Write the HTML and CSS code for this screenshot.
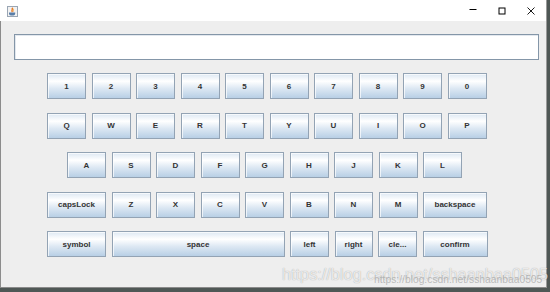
FILE: index.html
```html
<!DOCTYPE html>
<html>
<head>
<meta charset="utf-8">
<link rel="stylesheet" href="styles.css">
</head>
<body>
<div class="window">
  <div class="titlebar">
    <svg class="app-icon" width="11" height="11" viewBox="0 0 11 11">
      <rect x="0.5" y="0.5" width="10" height="10" fill="#f2f2f2" stroke="#9aa6b4"/>
      <path d="M5 1.8 C6.4 3.4 3.8 4 5.4 6" stroke="#e8731a" fill="none" stroke-width="1.4"/>
      <path d="M6.2 2.6 C7 3.6 5.8 4.4 6.6 5.6" stroke="#f0a040" fill="none" stroke-width="0.9"/>
      <path d="M2 6.4 h6.2 v1.4 a1.8 1.8 0 0 1 -1.8 1.6 h-2.6 a1.8 1.8 0 0 1 -1.8 -1.6 z" fill="#5a7ea8"/>
    </svg>
    <div class="controls">
      <span class="ctl ctl-min"><svg width="10" height="10" viewBox="0 0 10 10"><path d="M1.5 4.5 H8.5" stroke="#000" stroke-width="1"/></svg></span>
      <span class="ctl ctl-max"><svg width="10" height="10" viewBox="0 0 10 10"><rect x="2" y="2" width="6" height="6" fill="none" stroke="#000" stroke-width="1"/></svg></span>
      <span class="ctl ctl-close"><svg width="10" height="10" viewBox="0 0 10 10"><path d="M1.5 1.5 L8.5 8.5 M8.5 1.5 L1.5 8.5" stroke="#000" stroke-width="0.9"/></svg></span>
    </div>
  </div>
  <div class="content">
    <div class="field"></div>
    <div class="keyboard">
      <div class="row">
        <button class="key">1</button><button class="key">2</button><button class="key">3</button><button class="key">4</button><button class="key">5</button><button class="key">6</button><button class="key">7</button><button class="key">8</button><button class="key">9</button><button class="key">0</button>
      </div>
      <div class="row">
        <button class="key">Q</button><button class="key">W</button><button class="key">E</button><button class="key">R</button><button class="key">T</button><button class="key">Y</button><button class="key">U</button><button class="key">I</button><button class="key">O</button><button class="key">P</button>
      </div>
      <div class="row row-indent">
        <button class="key">A</button><button class="key">S</button><button class="key">D</button><button class="key">F</button><button class="key">G</button><button class="key">H</button><button class="key">J</button><button class="key">K</button><button class="key">L</button>
      </div>
      <div class="row">
        <button class="key key-wide">capsLock</button><button class="key">Z</button><button class="key">X</button><button class="key">C</button><button class="key">V</button><button class="key">B</button><button class="key">N</button><button class="key">M</button><button class="key key-back">backspace</button>
      </div>
      <div class="row">
        <button class="key key-wide">symbol</button><button class="key key-space">space</button><button class="key">left</button><button class="key key-right">right</button><button class="key">cle...</button><button class="key key-confirm">confirm</button>
      </div>
    </div>
    <div class="watermark">https://blog.csdn.net/sshaanbaa0505</div>
    <div class="watermark-small">https://blog.csdn.net/sshaanbaa0505</div>
  </div>
</div>
</body>
</html>
```
FILE: styles.css
```css
html, body {
  margin: 0;
  padding: 0;
}
body {
  width: 550px;
  height: 292px;
  background: #4f5755;
  overflow: hidden;
  font-family: "Liberation Sans", Arial, sans-serif;
}
.window {
  width: 547px;
  height: 288px;
  display: flex;
  flex-direction: column;
  box-sizing: border-box;
  border-right: 1px solid #9a9a9a;
  border-bottom: 1px solid #8a8a8a;
  background: #eeeeee;
}
.titlebar {
  height: 21px;
  flex: 0 0 21px;
  background: #ffffff;
  display: flex;
  align-items: flex-start;
}
.app-icon {
  margin: 6px 0 0 7px;
}
.controls {
  margin-left: auto;
  display: flex;
  height: 21px;
}
.ctl {
  width: 29px;
  height: 21px;
  display: flex;
  align-items: center;
  justify-content: center;
}
.ctl-min svg { margin-top: -1px; }
.ctl-max svg { margin-top: 1px; }
.ctl-close { width: 30px; }
.ctl-close svg { margin-top: 1px; }
.content {
  position: relative;
  flex: 1;
  background: #eeeeee;
  border-left: 1px solid #8c8c8c;
  padding: 13px 0 0 13px;
}
.field {
  width: 525px;
  height: 26px;
  box-sizing: border-box;
  background: #ffffff;
  border: 1px solid #8496a8;
  box-shadow: inset 1px 1px 0 #e3e8ee;
}
.keyboard {
  margin: 13px 0 0 33px;
  display: flex;
  flex-direction: column;
  gap: 13.5px;
}
.row {
  display: flex;
  gap: 5.5px;
}
.row-indent {
  margin-left: 20px;
}
.key {
  width: 39px;
  height: 26px;
  box-sizing: border-box;
  margin: 0;
  padding: 0;
  border: 1px solid #93a3b4;
  border-radius: 0;
  background: linear-gradient(to bottom, #dde8f3 0%, #ffffff 30%, #dde8f3 60%, #b8cfe5 100%);
  box-shadow: inset 1px 1px 0 rgba(255,255,255,0.7);
  font-family: "Liberation Sans", Arial, sans-serif;
  font-weight: bold;
  font-size: 8px;
  color: #333333;
  display: flex;
  align-items: center;
  justify-content: center;
  white-space: nowrap;
}
.key-wide { width: 59px; }
.key-back { width: 64px; }
.key-space { width: 173px; }
.key-right { width: 38px; }
.key-confirm { width: 65px; }
.watermark {
  position: absolute;
  left: 281px;
  top: 245px;
  font-family: "Liberation Sans", Arial, sans-serif;
  font-size: 16.3px;
  line-height: 1;
  color: rgba(255, 255, 255, 0.75);
  text-shadow: 0 0 1px rgba(0, 0, 0, 0.35);
  white-space: nowrap;
}
.watermark-small {
  position: absolute;
  left: 373px;
  top: 254px;
  font-family: "Liberation Sans", Arial, sans-serif;
  font-size: 10.3px;
  line-height: 1;
  color: rgba(150, 150, 150, 0.6);
  white-space: nowrap;
}
```
